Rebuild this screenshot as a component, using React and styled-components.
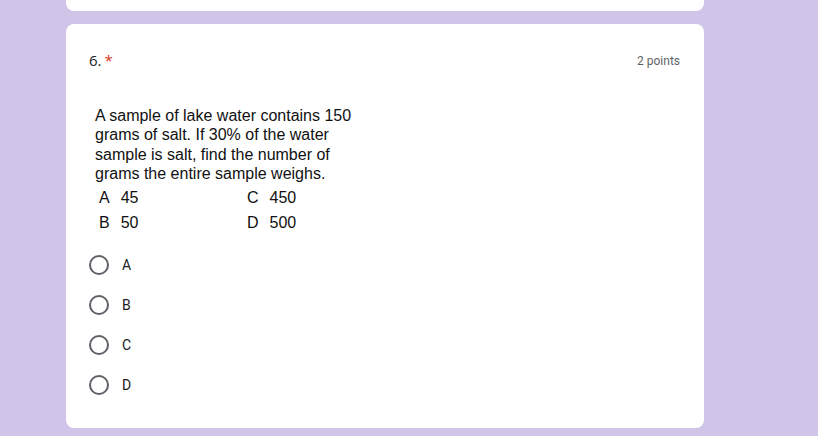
import React from "react";
import styled, { createGlobalStyle } from "styled-components";

const Global = createGlobalStyle`
  html, body { margin: 0; padding: 0; background: #d1c4e9; }
  body { font-family: Roboto, "Liberation Sans", sans-serif; }
`;

const Page = styled.div`
  width: 638px;
  margin: 0 0 0 66px;
  display: flex;
  flex-direction: column;
  gap: 13px;
  margin-top: -30px;
`;

const Card = styled.div`
  background: #fff;
  border-radius: 8px;
  height: ${(p) => p.$h}px;
  box-sizing: border-box;
  padding: 24px 24px 0 23px;
`;

const Header = styled.div`
  display: flex;
  justify-content: space-between;
  align-items: center;
  height: 23px;
`;

const Title = styled.div`
  font-family: "Open Sans", Roboto, sans-serif;
  font-size: 15px;
  color: #202124;
`;

const Star = styled.span`
  color: #d93025;
  margin-left: 3px;
`;

const Points = styled.div`
  font-size: 12px;
  color: #5f6368;
  padding-top: 2px;
`;

const Problem = styled.div`
  margin: 35px 0 0 6px;
  font-family: "Liberation Sans", Arial, sans-serif;
  font-size: 16px;
  line-height: 19.3px;
  color: #111;
  width: 265px;
`;

const Choices = styled.div`
  display: grid;
  grid-template-columns: 148px 100px;
  row-gap: 6px;
  margin: 5px 0 0 4px;
  line-height: 19px;
`;

const Choice = styled.div`
  display: flex;
  gap: 11px;
`;

const Radios = styled.div`
  display: flex;
  flex-direction: column;
  gap: 20px;
  margin-top: 23px;
`;

const RadioRow = styled.label`
  display: flex;
  align-items: center;
  gap: 13px;
  height: 20px;
  font-size: 14px;
  color: #202124;
`;

const Circle = styled.span`
  width: 20px;
  height: 20px;
  box-sizing: border-box;
  border: 2px solid #5f6368;
  border-radius: 50%;
`;

export default function App() {
  return (
    <>
      <Global />
      <Page>
        <Card $h={41} />
        <Card $h={404}>
          <Header>
            <Title>
              6.<Star>*</Star>
            </Title>
            <Points>2 points</Points>
          </Header>
          <Problem>
            A sample of lake water contains 150 grams of salt. If 30% of the water sample is salt, find the number of grams the entire sample weighs.
            <Choices>
              <Choice><span>A</span><span>45</span></Choice>
              <Choice><span>C</span><span>450</span></Choice>
              <Choice><span>B</span><span>50</span></Choice>
              <Choice><span>D</span><span>500</span></Choice>
            </Choices>
          </Problem>
          <Radios>
            {["A", "B", "C", "D"].map((l) => (
              <RadioRow key={l}>
                <Circle />
                {l}
              </RadioRow>
            ))}
          </Radios>
        </Card>
      </Page>
    </>
  );
}
